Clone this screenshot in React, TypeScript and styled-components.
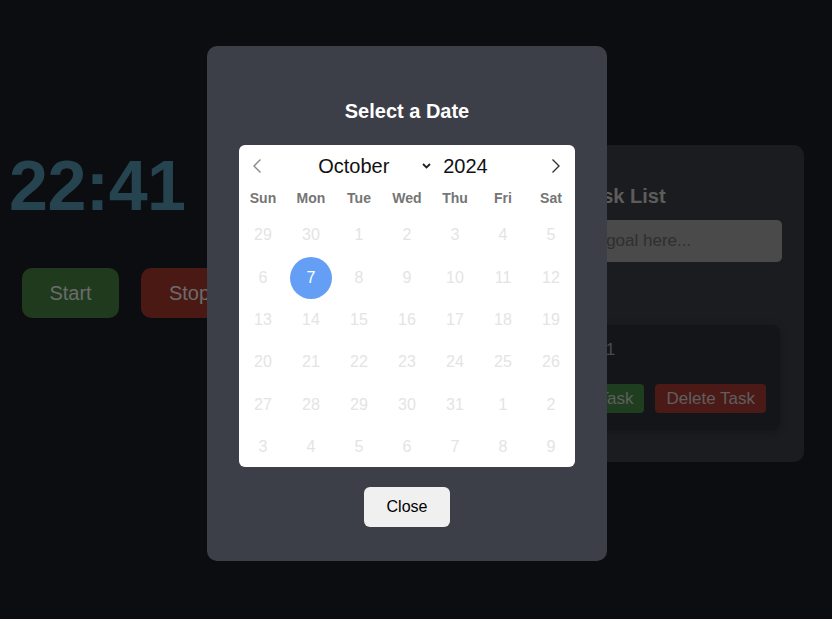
import React from "react";
import styled, { createGlobalStyle } from "styled-components";

const Global = createGlobalStyle`
  html, body { margin: 0; padding: 0; }
  body {
    background: #181a20;
    font-family: "Liberation Sans", Arial, sans-serif;
    width: 832px;
    height: 619px;
    overflow: hidden;
  }
`;

const Page = styled.div`
  position: relative;
  width: 832px;
  height: 619px;
  display: flex;
  align-items: flex-start;
`;

const LeftColumn = styled.div`
  display: flex;
  flex-direction: column;
  padding: 151px 0 0 9px;
  width: 525px;
  flex-shrink: 0;
  box-sizing: border-box;
`;

const Clock = styled.div`
  font-size: 70px;
  font-weight: 700;
  letter-spacing: -0.5px;
  color: #4c889e;
  line-height: 70px;
`;

const ButtonRow = styled.div`
  display: flex;
  gap: 22px;
  margin: 47px 0 0 13px;
`;

const BigButton = styled.button<{ $tone: "green" | "red" }>`
  width: 97px;
  height: 50px;
  border: none;
  border-radius: 10px;
  font-family: inherit;
  font-size: 20px;
  color: #d6d6d6;
  background: ${(p) => (p.$tone === "green" ? "#3e743a" : "#943228")};
`;

const Panel = styled.div`
  margin-top: 145px;
  width: 279px;
  height: 317px;
  flex-shrink: 0;
  box-sizing: border-box;
  padding: 0 22px;
  background: #36383e;
  border-radius: 10px;
  display: flex;
  flex-direction: column;
`;

const PanelTitle = styled.h2`
  margin: 40px 0 0;
  font-size: 20px;
  line-height: 23px;
  color: #b8b8b8;
  white-space: nowrap;
`;

const GoalInput = styled.input`
  margin-top: 12px;
  height: 42px;
  box-sizing: border-box;
  border: none;
  border-radius: 5px;
  background: #949494;
  padding: 0 10px;
  font-family: inherit;
  font-size: 17px;
  &::placeholder { color: #5e5e5e; }
`;

const TaskCard = styled.div`
  margin-top: 63px;
  margin-right: 2px;
  height: 105px;
  box-sizing: border-box;
  padding: 15px 14px 17px 19px;
  background: #282a30;
  border-radius: 8px;
  box-shadow: 0 2px 8px rgba(0, 0, 0, 0.25);
  display: flex;
  flex-direction: column;
`;

const TaskName = styled.div`
  font-size: 17px;
  line-height: 20px;
  color: #949494;
`;

const TaskActions = styled.div`
  margin-top: 24px;
  display: flex;
  justify-content: flex-end;
  gap: 11px;
`;

const SmallButton = styled.button<{ $tone: "green" | "red" }>`
  height: 29px;
  padding: 0 11px;
  border: none;
  border-radius: 4px;
  font-family: inherit;
  font-size: 17px;
  white-space: nowrap;
  flex-shrink: 0;
  color: #bcbcbc;
  background: ${(p) => (p.$tone === "green" ? "#3e7a3e" : "#96342e")};
`;

const Overlay = styled.div`
  position: absolute;
  inset: 0;
  background: rgba(0, 0, 0, 0.5);
  display: flex;
  justify-content: center;
  align-items: center;
  padding: 0 18px 12px 0;
  box-sizing: border-box;
`;

const Modal = styled.div`
  width: 400px;
  box-sizing: border-box;
  padding: 32px 32px 34px;
  background: #3d3f48;
  border-radius: 10px;
  display: flex;
  flex-direction: column;
  align-items: center;
`;

const ModalTitle = styled.h2`
  margin: 22px 0 22px;
  font-size: 20px;
  line-height: 23px;
  font-weight: 700;
  color: #ffffff;
`;

const Calendar = styled.div`
  width: 336px;
  height: 322px;
  box-sizing: border-box;
  background: #ffffff;
  border-radius: 6px;
  padding-top: 7px;
  display: flex;
  flex-direction: column;
  overflow: hidden;
`;

const CalHeader = styled.div`
  height: 28px;
  flex-shrink: 0;
  display: grid;
  grid-template-columns: 40px 1fr 40px;
  align-items: center;
`;

const NavButton = styled.button<{ $side: "left" | "right" }>`
  border: none;
  background: none;
  padding: 0;
  height: 28px;
  display: flex;
  align-items: center;
  justify-content: ${(p) => (p.$side === "left" ? "flex-start" : "flex-end")};
  padding-left: ${(p) => (p.$side === "left" ? "13px" : "0")};
  padding-right: ${(p) => (p.$side === "right" ? "14px" : "0")};
`;

const MonthYear = styled.div`
  display: flex;
  align-items: center;
  justify-content: center;
  padding-right: 8px;
`;

const MonthSelect = styled.select`
  appearance: none;
  -webkit-appearance: none;
  border: none;
  background: transparent;
  padding: 0;
  margin: 0;
  width: 104px;
  font-family: "Liberation Sans", Arial, sans-serif;
  font-size: 20px;
  color: #111111;
  outline: none;
`;

const Year = styled.span`
  margin-left: 12px;
  font-size: 20px;
  color: #111111;
`;

const WeekRow = styled.div`
  margin-top: 6px;
  height: 24px;
  flex-shrink: 0;
  display: grid;
  grid-template-columns: repeat(7, 48px);
  align-items: center;
`;

const WeekDay = styled.div`
  text-align: center;
  font-size: 14px;
  font-weight: 700;
  color: #757575;
`;

const DayGrid = styled.div`
  margin-top: 4px;
  flex-shrink: 0;
  display: grid;
  grid-template-columns: repeat(7, 48px);
  grid-auto-rows: 42.4px;
`;

const Day = styled.div`
  display: flex;
  align-items: center;
  justify-content: center;
`;

const DayNum = styled.span<{ $selected?: boolean }>`
  width: 42px;
  height: 42px;
  border-radius: 50%;
  display: flex;
  align-items: center;
  justify-content: center;
  font-size: 16px;
  color: ${(p) => (p.$selected ? "#ffffff" : "#e4e4e4")};
  background: ${(p) => (p.$selected ? "#659ff5" : "transparent")};
`;

const CloseButton = styled.button`
  margin-top: 20px;
  height: 40px;
  padding: 0 23px;
  border: none;
  border-radius: 6px;
  background: #f0f0f0;
  font-family: inherit;
  font-size: 16px;
  color: #000000;
`;

const months = [
  "January", "February", "March", "April", "May", "June",
  "July", "August", "September", "October", "November", "December",
];
const weekDays = ["Sun", "Mon", "Tue", "Wed", "Thu", "Fri", "Sat"];

const days: number[] = [
  29, 30, 1, 2, 3, 4, 5,
  6, 7, 8, 9, 10, 11, 12,
  13, 14, 15, 16, 17, 18, 19,
  20, 21, 22, 23, 24, 25, 26,
  27, 28, 29, 30, 31, 1, 2,
  3, 4, 5, 6, 7, 8, 9,
];

const Chevron = ({ dir, color }: { dir: "left" | "right"; color: string }) => (
  <svg width="10" height="16" viewBox="0 0 10 16">
    <polyline
      points={dir === "left" ? "8.5,1.5 2,8 8.5,14.5" : "1.5,1.5 8,8 1.5,14.5"}
      fill="none"
      stroke={color}
      strokeWidth="1.4"
    />
  </svg>
);

const DownArrow = () => (
  <svg width="9" height="6" viewBox="0 0 9 6">
    <polyline points="1,1 4.5,4.5 8,1" fill="none" stroke="#222" strokeWidth="1.8" />
  </svg>
);

export default function App() {
  return (
    <>
      <Global />
      <Page>
        <LeftColumn>
          <Clock>22:41</Clock>
          <ButtonRow>
            <BigButton $tone="green">Start</BigButton>
            <BigButton $tone="red">Stop</BigButton>
          </ButtonRow>
        </LeftColumn>
        <Panel>
          <PanelTitle>My Task List</PanelTitle>
          <GoalInput placeholder="Add a goal here..." />
          <TaskCard>
            <TaskName>Task 1</TaskName>
            <TaskActions>
              <SmallButton $tone="green">Edit Task</SmallButton>
              <SmallButton $tone="red">Delete Task</SmallButton>
            </TaskActions>
          </TaskCard>
        </Panel>
        <Overlay>
          <Modal>
            <ModalTitle>Select a Date</ModalTitle>
            <Calendar>
              <CalHeader>
                <NavButton $side="left">
                  <Chevron dir="left" color="#8a8a8a" />
                </NavButton>
                <MonthYear>
                  <MonthSelect defaultValue="October">
                    {months.map((m) => (
                      <option key={m} value={m}>
                        {m}
                      </option>
                    ))}
                  </MonthSelect>
                  <DownArrow />
                  <Year>2024</Year>
                </MonthYear>
                <NavButton $side="right">
                  <Chevron dir="right" color="#333333" />
                </NavButton>
              </CalHeader>
              <WeekRow>
                {weekDays.map((d) => (
                  <WeekDay key={d}>{d}</WeekDay>
                ))}
              </WeekRow>
              <DayGrid>
                {days.map((d, i) => (
                  <Day key={i}>
                    <DayNum $selected={i === 8}>{d}</DayNum>
                  </Day>
                ))}
              </DayGrid>
            </Calendar>
            <CloseButton>Close</CloseButton>
          </Modal>
        </Overlay>
      </Page>
    </>
  );
}
